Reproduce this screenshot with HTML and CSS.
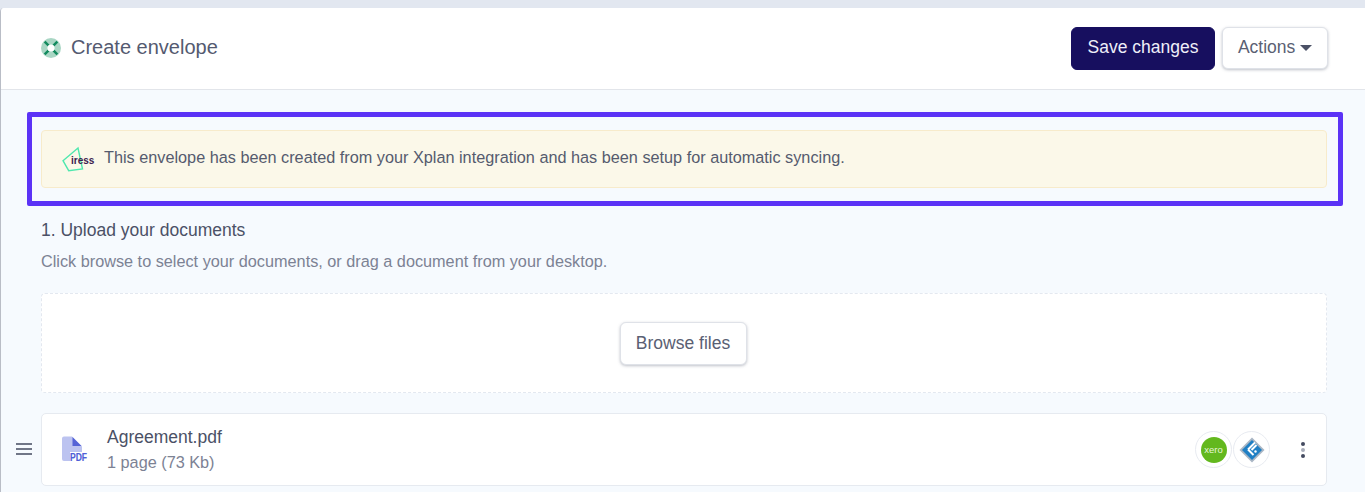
FILE: index.html
```html
<!DOCTYPE html>
<html lang="en">
<head>
<meta charset="utf-8">
<title>Create envelope</title>
<link rel="stylesheet" href="styles.css">
</head>
<body>
<div class="page">
  <header class="header">
    <div class="title-group">
      <svg class="logo" width="20" height="20" viewBox="0 0 20 20">
        <circle cx="10" cy="10" r="10" fill="#a9d6c4"/>
        <path d="M2.800 4.500 4.500 2.800l4 4L6.800 8.500zM17.200 4.500 15.500 2.800l-4 4 1.700 1.700zM2.800 15.500l1.700 1.700 4-4-1.700-1.700zM17.200 15.500l-1.700 1.700-4-4 1.700-1.700z" fill="#128a5e"/>
        <circle cx="10" cy="10" r="3.600" fill="#fff"/>
      </svg>
      <h1 class="title">Create envelope</h1>
    </div>
    <div class="actions">
      <button class="btn btn-primary">Save changes</button>
      <button class="btn btn-default">Actions <span class="caret"></span></button>
    </div>
  </header>
  <main class="content">
    <div class="alert-wrap">
      <div class="alert">
        <span class="iress">
          <svg class="iress-mark" width="24" height="26" viewBox="0 0 24 26"><path d="M1 14.700 16 2l4.500 21-13.800 1.700z" fill="none" stroke="#4fe8ae" stroke-width="1.400"/></svg>
          <span class="iress-text">iress</span>
        </span>
        <span class="alert-text">This envelope has been created from your Xplan integration and has been setup for automatic syncing.</span>
      </div>
      <div class="highlight"></div>
    </div>
    <h2 class="step">1. Upload your documents</h2>
    <p class="hint">Click browse to select your documents, or drag a document from your desktop.</p>
    <div class="dropzone"><button class="btn btn-default">Browse files</button></div>
    <div class="doc-row">
      <svg class="handle" width="16" height="12" viewBox="0 0 16 12"><path d="M0 1h16M0 6h16M0 11h16" stroke="#444b60" stroke-width="1.600"/></svg>
      <div class="doc">
        <svg class="pdf" width="30" height="28" viewBox="0 0 30 28">
          <path d="M1 2.500A2 2 0 0 1 3 .5h8l10 10v5.500H9v9H3a2 2 0 0 1-2-2z" fill="#bcc3f0"/>
          <path d="M11.500 1 20.500 10h-9z" fill="#5563d6"/>
          <text x="9" y="24.500" class="pdf-text" textLength="17" lengthAdjust="spacingAndGlyphs">PDF</text>
        </svg>
        <div class="doc-info">
          <div class="doc-name">Agreement.pdf</div>
          <div class="doc-meta">1 page (73 Kb)</div>
        </div>
        <div class="integrations">
          <span class="badge"><span class="xero">xero</span></span>
          <span class="badge">
            <svg width="26" height="26" viewBox="0 0 26 26">
              <path d="M13 .5 25.500 13 13 25.500 .5 13z" fill="#a9b6c4"/>
              <path d="M13 3 23 13 13 23 3 13z" fill="#1f7fc4"/>
              <path d="M9 12.500 16 5.500M9 12.500l5.500 5.500M12.500 13l5-5" fill="none" stroke="#fff" stroke-width="2"/>
              <circle cx="16.500" cy="14.500" r="1.200" fill="#fff"/>
            </svg>
          </span>
        </div>
        <span class="kebab"><i></i><i></i><i></i></span>
      </div>
    </div>
  </main>
</div>
</body>
</html>
```
FILE: styles.css
```css
* { box-sizing: border-box; }
html, body { margin: 0; height: 492px; overflow: hidden; }
body {
  background: #e2e7f0;
  padding-top: 8px;
  font-family: "Liberation Sans", Arial, sans-serif;
  color: #4b5166;
}
.page {
  height: 484px;
  background: #f6fafe;
  border-left: 1px solid #b9bdc6;
  border-top-left-radius: 4px;
  overflow: hidden;
}
.header {
  height: 82px;
  background: #fff;
  border-bottom: 1px solid #e2e5ea;
  display: flex;
  align-items: center;
  justify-content: space-between;
  padding: 0 37px 0 40px;
}
.title-group { display: flex; align-items: center; gap: 10px; padding-bottom: 2px; }
.title { margin: 0; font-size: 20px; font-weight: 400; color: #545a70; }
.actions { display: flex; gap: 7px; align-items: flex-start; padding-bottom: 1px; }
.btn {
  font-family: inherit;
  font-size: 17.500px;
  border-radius: 6px;
  height: 43px;
  white-space: nowrap;
  cursor: pointer;
}
.btn-primary {
  width: 144px;
  padding: 0 0 2px;
  background: #170f5f;
  border: 1px solid #170f5f;
  color: #eeeef8;
}
.btn-default {
  background: #fff;
  border: 1px solid #dfe2e8;
  color: #5a6073;
  box-shadow: 0 1px 3px rgba(70, 78, 100, .35);
  padding: 0 15px;
}
.actions .btn-default { width: 106px; height: 42px; padding: 0 0 1px; }
.caret {
  display: inline-block;
  width: 0;
  height: 0;
  border: 6px solid transparent;
  border-top: 6px solid #4b5166;
  border-bottom: 0;
  vertical-align: 2px;
}
.content { padding: 40px 38px 0 40px; }
.alert-wrap { position: relative; }
.alert {
  height: 58px;
  background: #fbf8e9;
  border: 1px solid #f7ebcb;
  border-radius: 4px;
  display: flex;
  align-items: center;
  padding-left: 20px;
  color: #555b6e;
}
.alert-text { font-size: 16.250px; padding-bottom: 3px; }
.highlight {
  position: absolute;
  inset: -18px -16px -18px -14px;
  border: 5px solid #5b32f6;
  border-radius: 2px;
  pointer-events: none;
}
.iress {
  position: relative;
  width: 42px;
  height: 26px;
  flex: none;
}
.iress-mark { display: block; }
.iress-text {
  position: absolute;
  left: 9px;
  top: 9px;
  font-size: 10px;
  line-height: 12px;
  font-weight: 700;
  color: #3c1c4f;
}
.step { margin: 32px 0 0; font-size: 17.500px; line-height: 20px; font-weight: 400; color: #4b5166; }
.hint { margin: 11px 0 0; font-size: 16.250px; line-height: 20px; color: #7c8294; }
.dropzone {
  margin-top: 22px;
  height: 100px;
  background: #fff;
  border: 1px dashed #e3e8f0;
  border-radius: 4px;
  display: flex;
  align-items: center;
  justify-content: center;
}
.dropzone .btn { width: 127px; margin-right: 2px; }
.doc-row { position: relative; margin-top: 20px; }
.handle { position: absolute; left: -25px; top: 30px; }
.doc {
  height: 73px;
  background: #fff;
  border: 1px solid #e6eaf0;
  border-radius: 5px;
  display: flex;
  align-items: center;
  padding: 0 21px 0 19px;
}
.pdf { flex: none; margin-right: 16px; }
.pdf-text { font: 700 10.500px "Liberation Sans", sans-serif; fill: #4f5fd8; stroke: #4f5fd8; stroke-width: .2px; }
.doc-info { flex: 1; }
.doc-name { font-size: 17.500px; line-height: 20px; color: #4b5166; }
.doc-meta { font-size: 16.250px; line-height: 20px; margin-top: 5px; color: #7c8294; }
.integrations { display: flex; gap: 1px; margin-right: 31px; }
.badge {
  width: 37px;
  height: 37px;
  border-radius: 50%;
  background: #fff;
  border: 1px solid #e8ebf1;
  display: flex;
  align-items: center;
  justify-content: center;
}
.xero {
  width: 26px;
  height: 26px;
  border-radius: 50%;
  background: #63b81e;
  color: #e8f6d8;
  font-size: 9.500px;
  line-height: 25px;
  text-align: center;
}
.kebab { display: flex; flex-direction: column; gap: 2px; width: 4px; }
.kebab i { display: block; width: 4px; height: 4px; border-radius: 50%; background: #444b60; }
.kebab i:nth-child(2) { background: #a9aebb; }
```
